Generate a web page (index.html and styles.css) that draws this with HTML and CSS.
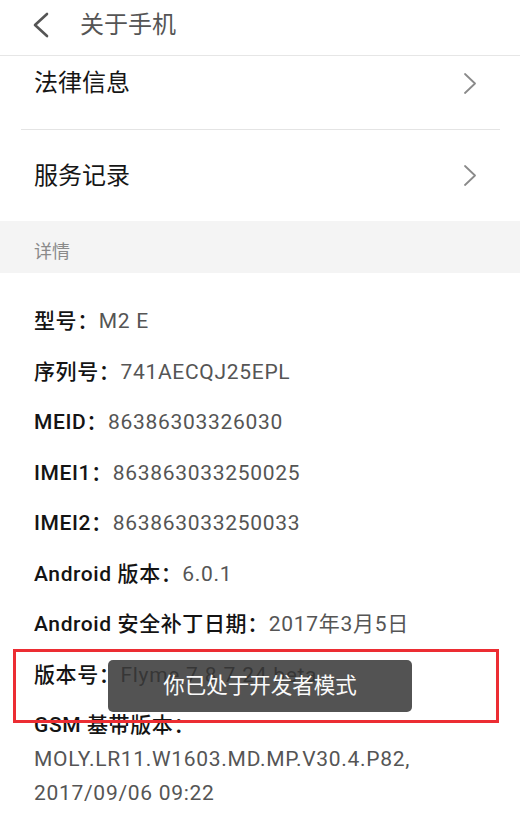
FILE: index.html
```html
<!DOCTYPE html>
<html lang="zh-CN">
<head>
<meta charset="utf-8">
<title>关于手机</title>
<link rel="stylesheet" href="styles.css">
</head>
<body>
<div class="screen">
  <header class="topbar">
    <svg class="back" width="20" height="30" viewBox="0 0 20 30"><polyline points="14,2 2,13 14,24" fill="none" stroke="#555" stroke-width="2.6" stroke-linecap="round" stroke-linejoin="round"/></svg>
    <span class="title">关于手机</span>
  </header>

  <div class="row row--first">
    <span class="row-text">法律信息</span>
    <svg class="chev" width="14" height="22" viewBox="0 0 14 22"><polyline points="2,1 12,10.5 2,20" fill="none" stroke="#8a8a8a" stroke-width="1.8" stroke-linecap="round" stroke-linejoin="round"/></svg>
  </div>
  <div class="sep"></div>
  <div class="row">
    <span class="row-text">服务记录</span>
    <svg class="chev" width="14" height="22" viewBox="0 0 14 22"><polyline points="2,1 12,10.5 2,20" fill="none" stroke="#8a8a8a" stroke-width="1.8" stroke-linecap="round" stroke-linejoin="round"/></svg>
  </div>

  <div class="section">详情</div>

  <div class="details">
    <div class="item"><span class="label">型号：</span><span class="value">M2 E</span></div>
    <div class="item"><span class="label">序列号：</span><span class="value">741AECQJ25EPL</span></div>
    <div class="item"><span class="label">MEID：</span><span class="value">86386303326030</span></div>
    <div class="item"><span class="label">IMEI1：</span><span class="value">863863033250025</span></div>
    <div class="item"><span class="label">IMEI2：</span><span class="value">863863033250033</span></div>
    <div class="item"><span class="label">Android 版本：</span><span class="value">6.0.1</span></div>
    <div class="item"><span class="label">Android 安全补丁日期：</span><span class="value">2017年3月5日</span></div>
    <div class="item"><span class="label">版本号：</span><span class="value">Flyme 7.8.7.24 beta</span></div>
    <div class="item item--multi">
      <div class="label">GSM 基带版本：</div>
      <div class="value">MOLY.LR11.W1603.MD.MP.V30.4.P82,</div>
      <div class="value">2017/09/06 09:22</div>
    </div>

    <div class="highlight"></div>
    <div class="toast">你已处于开发者模式</div>
  </div>
</div>
</body>
</html>
```
FILE: styles.css
```css
html, body {
  margin: 0;
  padding: 0;
  background: #fff;
}
body {
  width: 520px;
  height: 813px;
  overflow: hidden;
  font-family: Roboto, "Noto Sans CJK SC", "Noto Sans", sans-serif;
}
.screen {
  width: 520px;
}
.topbar {
  height: 55px;
  border-bottom: 1px solid #e6e6e6;
  display: flex;
  align-items: center;
  box-sizing: content-box;
}
.back {
  margin-left: 33px;
  margin-top: -1px;
  flex: none;
}
.title {
  margin-left: 27px;
  font-size: 24px;
  line-height: 30px;
  color: #555;
  margin-top: -5px;
}
.row {
  height: 91px;
  display: flex;
  align-items: center;
  justify-content: space-between;
  padding: 0 43px 0 34px;
}
.row--first {
  height: 73px;
  align-items: flex-start;
  padding-top: 12px;
  box-sizing: border-box;
}
.row-text {
  font-size: 24px;
  line-height: 30px;
  color: #161616;
}
.row--first .chev {
  margin-top: 5px;
}
.sep {
  height: 1px;
  background: #e4e4e4;
  margin: 0 20px 0 21px;
}
.section {
  height: 52px;
  background: #f4f4f4;
  box-sizing: border-box;
  padding: 19px 0 0 34px;
  font-size: 18px;
  line-height: 24px;
  color: #8a8a8a;
}
.details {
  position: relative;
  padding: 23px 0 0 34px;
}
.item {
  font-size: 21px;
  line-height: 50.5px;
  white-space: nowrap;
  letter-spacing: 0.6px;
}
.label {
  color: #141414;
  font-weight: 500;
}
.value {
  color: #555;
  letter-spacing: 0.7px;
}
.item--multi {
  line-height: 34px;
  margin-top: 8px;
}
.highlight {
  position: absolute;
  left: 13px;
  top: 376px;
  width: 486px;
  height: 74px;
  box-sizing: border-box;
  border: 3px solid #ec2d33;
}
.toast {
  position: absolute;
  left: 108px;
  top: 387px;
  width: 304px;
  height: 52px;
  border-radius: 5px;
  background: rgba(48, 48, 48, 0.83);
  color: #fafafa;
  font-size: 21.5px;
  line-height: 52px;
  text-align: center;
}
```
